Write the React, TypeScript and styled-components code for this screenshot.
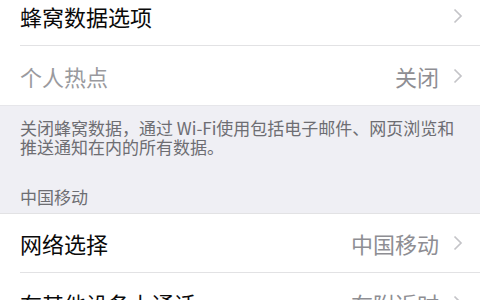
import styled, { createGlobalStyle } from 'styled-components';

const GlobalStyle = createGlobalStyle`
  html, body {
    margin: 0;
    padding: 0;
    background: #fff;
    overflow: hidden;
  }
  body {
    font-family: "Noto Sans CJK SC", "Noto Sans", sans-serif;
  }
`;

const Page = styled.div`
  width: 480px;
  height: 300px;
  overflow: hidden;
  background: #fff;
`;

const List = styled.div`
  margin-top: -13px;
  display: flex;
  flex-direction: column;
`;

const Group = styled.div`
  background: #fff;
  padding-left: 20px;
`;

const Row = styled.div<{ $last?: boolean }>`
  height: 59px;
  display: flex;
  align-items: center;
  padding-right: 17px;
  border-bottom: ${(p) => (p.$last ? 'none' : '1px solid #e2e2e4')};
  box-sizing: border-box;
`;

const Label = styled.div<{ $dim?: boolean }>`
  flex: 1;
  font-size: 22px;
  color: ${(p) => (p.$dim ? '#9a9a9e' : '#0a0a0a')};
`;

const Value = styled.div`
  font-size: 22px;
  color: #8e8e93;
  margin-right: 14px;
`;

const Chevron = styled.svg`
  width: 10px;
  height: 16px;
  flex-shrink: 0;
`;

const Footer = styled.div`
  background: #efeff4;
  padding: 12px 20px 7px 20px;
  border-top: 1px solid #e6e6ea;
  border-bottom: 1px solid #e2e2e4;
`;

const Note = styled.div`
  font-size: 17px;
  line-height: 19px;
  color: #6d6d72;
`;

const SectionTitle = styled.div`
  margin-top: 31px;
  font-size: 17px;
  line-height: 19px;
  color: #6d6d72;
`;

const Arrow = () => (
  <Chevron viewBox="0 0 10 16">
    <polyline points="1.5,1.5 8,8 1.5,14.5" fill="none" stroke="#c4c4c8" strokeWidth="1.7" />
  </Chevron>
);

type Item = { label: string; value?: string; dim?: boolean };

const top: Item[] = [
  { label: '蜂窝数据选项' },
  { label: '个人热点', value: '关闭', dim: true },
];

const bottom: Item[] = [
  { label: '网络选择', value: '中国移动' },
  { label: '在其他设备上通话', value: '在附近时' },
];

export default function App() {
  return (
    <Page>
      <GlobalStyle />
      <List>
        <Group>
          {top.map((it, i) => (
            <Row key={it.label} $last={i === top.length - 1}>
              <Label $dim={it.dim}>{it.label}</Label>
              {it.value && <Value>{it.value}</Value>}
              <Arrow />
            </Row>
          ))}
        </Group>
        <Footer>
          <Note>关闭蜂窝数据，通过 Wi-Fi使用包括电子邮件、网页浏览和推送通知在内的所有数据。</Note>
          <SectionTitle>中国移动</SectionTitle>
        </Footer>
        <Group>
          {bottom.map((it, i) => (
            <Row key={it.label} $last={i === bottom.length - 1}>
              <Label $dim={it.dim}>{it.label}</Label>
              {it.value && <Value>{it.value}</Value>}
              <Arrow />
            </Row>
          ))}
        </Group>
      </List>
    </Page>
  );
}
